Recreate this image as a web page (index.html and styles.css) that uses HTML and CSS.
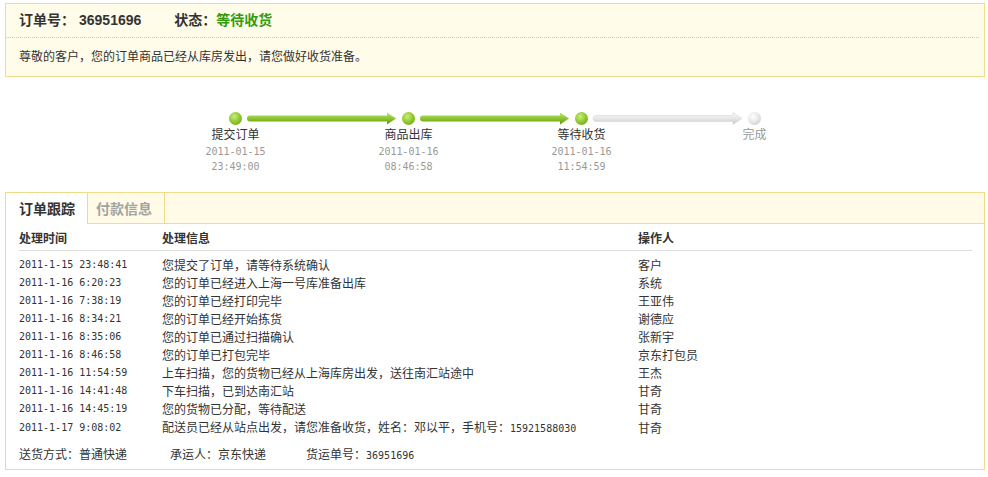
FILE: index.html
```html
<!DOCTYPE html>
<html lang="zh-CN">
<head>
<meta charset="utf-8">
<title>订单详情</title>
<link rel="stylesheet" href="styles.css">
</head>
<body>
<div class="page">
  <div class="order-head">
    <div class="order-title">
      <span>订单号：</span><span class="order-no">36951696</span><span class="status-lbl">状态：</span><span class="status">等待收货</span>
    </div>
    <div class="order-msg">尊敬的客户，您的订单商品已经从库房发出，请您做好收货准备。</div>
  </div>

  <div class="progress">
    <div class="track">
      <span class="node done"></span>
      <svg class="conn" width="160" height="13" viewBox="0 0 160 13">
        <defs><linearGradient id="gg1" x1="0" y1="0" x2="0" y2="1"><stop offset="0" stop-color="#c0e870"/><stop offset="0.5" stop-color="#8cc531"/><stop offset="1" stop-color="#5f940c"/></linearGradient></defs>
        <path d="M8 3.5 H145 V0.5 L154 6.5 L145 12.5 V9.5 H8 A3 3 0 0 1 8 3.5 Z" fill="url(#gg1)"/>
      </svg>
      <span class="node done"></span>
      <svg class="conn" width="160" height="13" viewBox="0 0 160 13">
        <defs><linearGradient id="gg2" x1="0" y1="0" x2="0" y2="1"><stop offset="0" stop-color="#c0e870"/><stop offset="0.5" stop-color="#8cc531"/><stop offset="1" stop-color="#5f940c"/></linearGradient></defs>
        <path d="M8 3.5 H145 V0.5 L154 6.5 L145 12.5 V9.5 H8 A3 3 0 0 1 8 3.5 Z" fill="url(#gg2)"/>
      </svg>
      <span class="node done"></span>
      <svg class="conn" width="160" height="13" viewBox="0 0 160 13">
        <defs><linearGradient id="gy1" x1="0" y1="0" x2="0" y2="1"><stop offset="0" stop-color="#fafafa"/><stop offset="0.5" stop-color="#e6e6e6"/><stop offset="1" stop-color="#c9c9c9"/></linearGradient></defs>
        <path d="M8 3.5 H145 V0.5 L154 6.5 L145 12.5 V9.5 H8 A3 3 0 0 1 8 3.5 Z" fill="url(#gy1)" stroke="#d6d6d6" stroke-width="0.6"/>
      </svg>
      <span class="node todo"></span>
    </div>
    <div class="labels">
      <div class="step"><div class="step-name">提交订单</div><div class="step-time">2011-01-15<br>23:49:00</div></div>
      <div class="step"><div class="step-name">商品出库</div><div class="step-time">2011-01-16<br>08:46:58</div></div>
      <div class="step"><div class="step-name">等待收货</div><div class="step-time">2011-01-16<br>11:54:59</div></div>
      <div class="step"><div class="step-name pending">完成</div></div>
    </div>
  </div>

  <div class="tabbox">
    <div class="tabs">
      <div class="tab active">订单跟踪</div>
      <div class="tab inactive">付款信息</div>
    </div>
    <div class="tabbody">
      <table class="log">
        <thead>
          <tr><th class="c1">处理时间</th><th class="c2">处理信息</th><th class="c3">操作人</th></tr>
        </thead>
        <tbody>
          <tr><td class="num">2011-1-15 23:48:41</td><td>您提交了订单，请等待系统确认</td><td>客户</td></tr>
          <tr><td class="num">2011-1-16 6:20:23</td><td>您的订单已经进入上海一号库准备出库</td><td>系统</td></tr>
          <tr><td class="num">2011-1-16 7:38:19</td><td>您的订单已经打印完毕</td><td>王亚伟</td></tr>
          <tr><td class="num">2011-1-16 8:34:21</td><td>您的订单已经开始拣货</td><td>谢德应</td></tr>
          <tr><td class="num">2011-1-16 8:35:06</td><td>您的订单已通过扫描确认</td><td>张新宇</td></tr>
          <tr><td class="num">2011-1-16 8:46:58</td><td>您的订单已打包完毕</td><td>京东打包员</td></tr>
          <tr><td class="num">2011-1-16 11:54:59</td><td>上车扫描，您的货物已经从上海库房出发，送往南汇站途中</td><td>王杰</td></tr>
          <tr><td class="num">2011-1-16 14:41:48</td><td>下车扫描，已到达南汇站</td><td>甘奇</td></tr>
          <tr><td class="num">2011-1-16 14:45:19</td><td>您的货物已分配，等待配送</td><td>甘奇</td></tr>
          <tr><td class="num">2011-1-17 9:08:02</td><td>配送员已经从站点出发，请您准备收货，姓名：邓以平，手机号：<span class="digits">15921588030</span></td><td>甘奇</td></tr>
        </tbody>
      </table>
      <div class="ship">
        <span class="ship-a">送货方式：普通快递</span>
        <span class="ship-b">承运人：京东快递</span>
        <span>货运单号：<span class="digits">36951696</span></span>
      </div>
    </div>
  </div>
</div>
</body>
</html>
```

FILE: styles.css
```css
body {
  margin: 0;
  background: #fff;
  color: #333;
  font-family: "Noto Sans CJK SC", "Liberation Sans", sans-serif;
  font-size: 12px;
}

.page {
  margin: 3px 3px 0 5px;
}

/* ---------- order header ---------- */
.order-head {
  border: 1px solid #efdc8c;
  background: #fffcea;
  height: 72px;
}

.order-title {
  height: 33px;
  line-height: 30px;
  margin-right: 5px;
  padding-left: 13px;
  border-bottom: 1px dotted #e0cb7a;
  font-size: 14px;
  font-weight: bold;
  color: #333;
}

.order-no {
  font-family: "Liberation Sans", sans-serif;
  margin-left: 4px;
}

.status-lbl {
  margin-left: 33px;
}

.status {
  color: #359a0c;
}

.order-msg {
  padding-left: 13px;
  line-height: 36px;
  color: #333;
}

/* ---------- progress ---------- */
.progress {
  height: 80px;
  padding-top: 35px;
}

.track {
  display: flex;
  align-items: center;
  height: 13px;
  padding-left: 224px;
}

.node {
  display: block;
  width: 13px;
  height: 13px;
  border-radius: 50%;
  flex: none;
}

.node.done {
  background: radial-gradient(circle at 40% 35%, #c8ee7a 0, #94cb33 45%, #64990f 100%);
}

.node.todo {
  background: radial-gradient(circle at 40% 35%, #ffffff 0, #e8e8e8 45%, #c2c2c2 100%);
}

.conn {
  display: block;
  flex: none;
}

.labels {
  display: flex;
  margin-top: 1px;
  padding-left: 144px;
}

.step {
  width: 173px;
  text-align: center;
}

.step-name {
  line-height: 16px;
  color: #333;
}

.step-name.pending {
  color: #999;
}

.step-time {
  margin-top: 2px;
  line-height: 15px;
  color: #999;
  font-family: "DejaVu Sans Mono", monospace;
  font-size: 10px;
}

/* ---------- tab box ---------- */
.tabbox {
  border: 1px solid #eedc8a;
}

.tabs {
  display: flex;
  height: 30px;
  background: #fffbe7;
  border-bottom: 1px solid #eedc8a;
}

.tab {
  line-height: 30px;
  font-size: 14px;
  font-weight: bold;
}

.tab.active {
  height: 31px;
  padding: 0 12px 0 13px;
  background: #fff;
  color: #333;
}

.tab.inactive {
  padding: 0 12px 0 8px;
  border-left: 1px solid #eedc8a;
  border-right: 1px solid #eedc8a;
  color: #a3a3a3;
}

.tabbody {
  padding: 2px 12px 4px 13px;
}

.log {
  width: 100%;
  border-collapse: collapse;
}

.log th {
  padding: 0;
  text-align: left;
  font-weight: bold;
  line-height: 24px;
  border-bottom: 1px solid #dcdcdc;
  color: #333;
}

.log .c1 { width: 143px; }
.log .c2 { width: 476px; }

.log td {
  padding: 0;
  line-height: 18px;
  white-space: nowrap;
  color: #333;
}

.log tbody tr:first-child td {
  padding-top: 5px;
}

.log td.num,
.digits {
  font-family: "DejaVu Sans Mono", monospace;
  font-size: 10px;
}

.ship {
  display: flex;
  margin-top: 7px;
  line-height: 18px;
  color: #333;
}

.ship-a { margin-right: 43px; }
.ship-b { margin-right: 40px; }
```
